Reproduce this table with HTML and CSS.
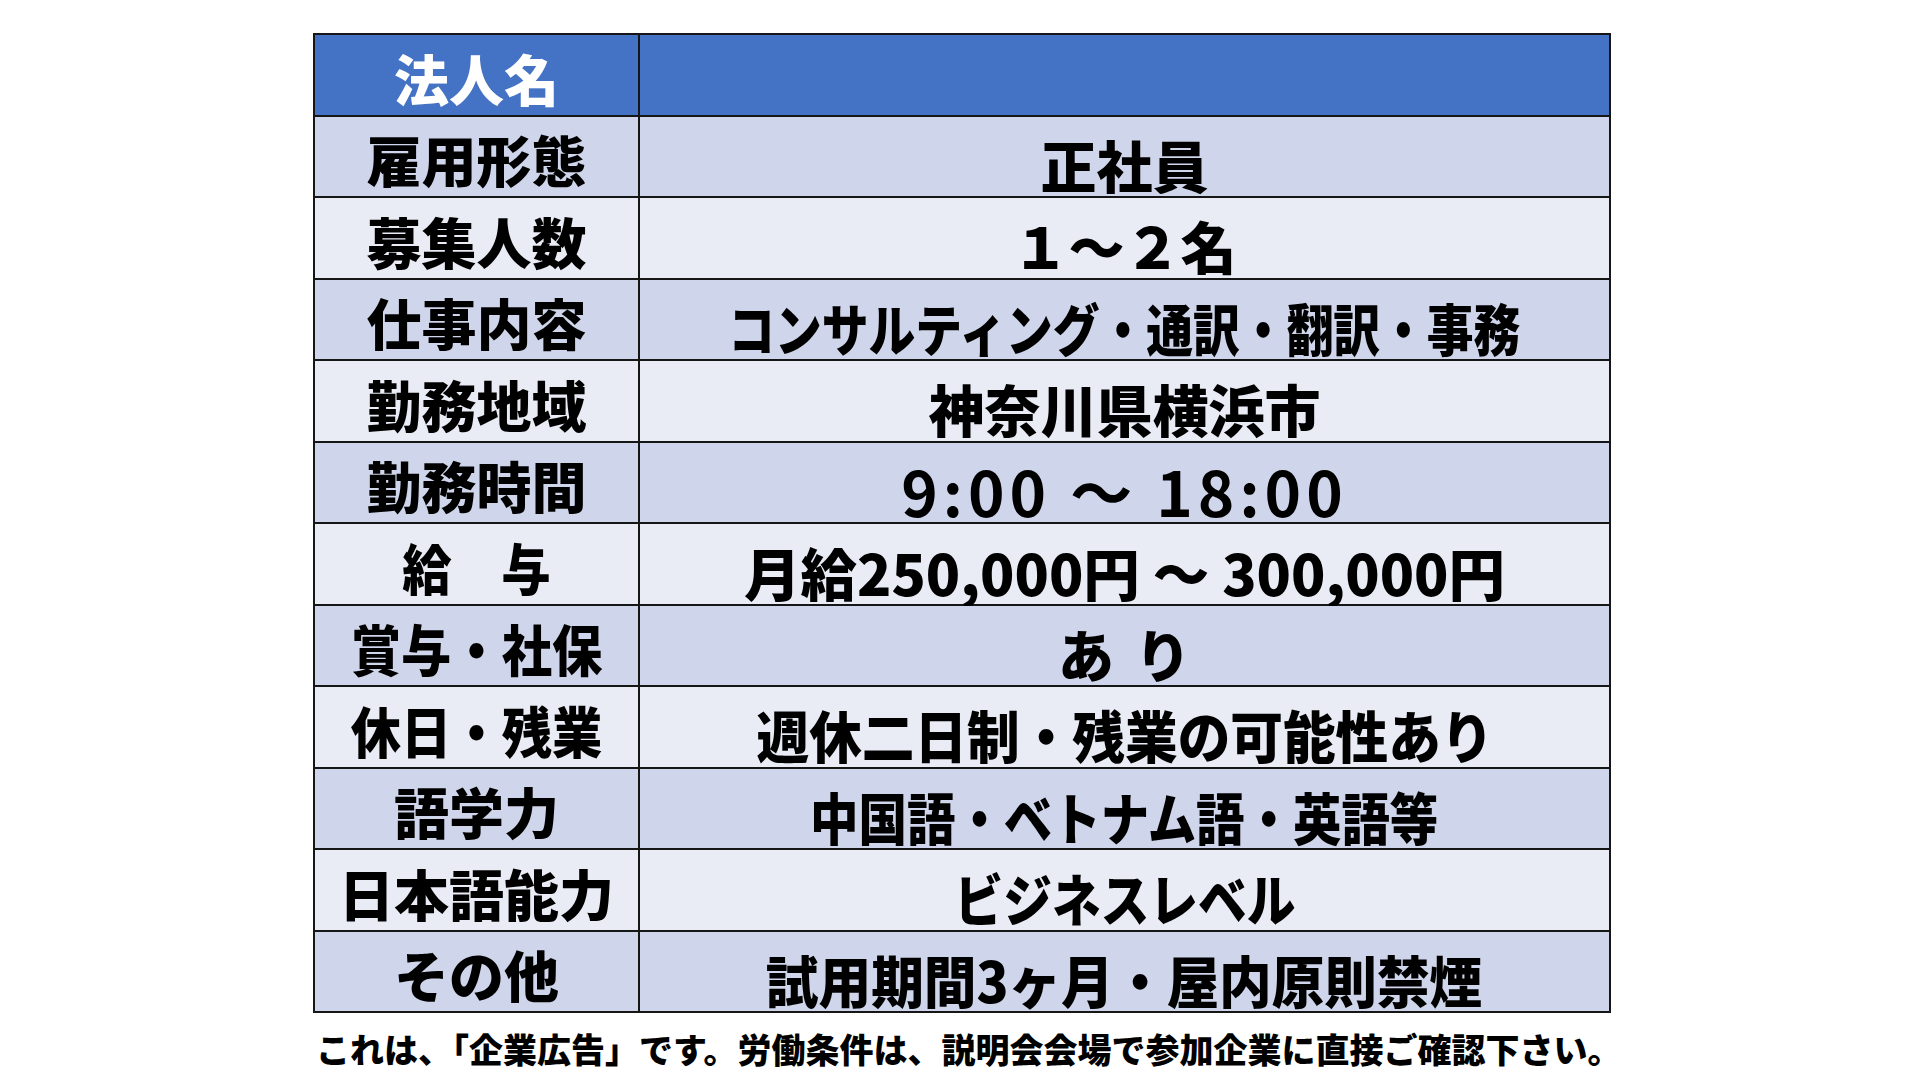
FILE: index.html
```html
<!DOCTYPE html>
<html lang="ja">
<head>
<meta charset="utf-8">
<title>求人票</title>
<link rel="stylesheet" href="styles.css">
</head>
<body>
<div class="page">
  <div class="sheet">
    <div class="cell head label">法人名</div>
    <div class="cell head"></div>

    <div class="cell dark label">雇用形態</div>
    <div class="cell dark value"><span class="t">正社員</span></div>

    <div class="cell light label">募集人数</div>
    <div class="cell light value"><span class="t">１～２名</span></div>

    <div class="cell dark label">仕事内容</div>
    <div class="cell dark value"><span class="t s83">コンサルティング・通訳・翻訳・事務</span></div>

    <div class="cell light label">勤務地域</div>
    <div class="cell light value"><span class="t">神奈川県横浜市</span></div>

    <div class="cell dark label">勤務時間</div>
    <div class="cell dark value"><span class="t time">9:00 ～ 18:00</span></div>

    <div class="cell light label"><span class="t s90">給　与</span></div>
    <div class="cell light value"><span class="t pay">月給250,000円 ～ 300,000円</span></div>

    <div class="cell dark label"><span class="t s92">賞与・社保</span></div>
    <div class="cell dark value"><span class="t wide">あ り</span></div>

    <div class="cell light label"><span class="t s92">休日・残業</span></div>
    <div class="cell light value"><span class="t s94">週休二日制・残業の可能性あり</span></div>

    <div class="cell dark label">語学力</div>
    <div class="cell dark value"><span class="t s86">中国語・ベトナム語・英語等</span></div>

    <div class="cell light label">日本語能力</div>
    <div class="cell light value"><span class="t s87">ビジネスレベル</span></div>

    <div class="cell dark label">その他</div>
    <div class="cell dark value"><span class="t s94">試用期間3ヶ月・屋内原則禁煙</span></div>
  </div>
  <p class="note">これは、「企業広告」です。労働条件は、説明会会場で参加企業に直接ご確認下さい。</p>
</div>
</body>
</html>
```

FILE: styles.css
```css
html, body {
  margin: 0;
  padding: 0;
  background: #ffffff;
}

body {
  font-family: "Noto Sans CJK JP", "Noto Sans", sans-serif;
  color: #000000;
}

.page {
  padding: 33px 0 0 313px;
}

.sheet {
  width: 1298px;
  box-sizing: border-box;
  display: grid;
  grid-template-columns: 323px 1fr;
  grid-auto-rows: 79.5px;
  gap: 2px;
  padding: 2px;
  background: #161616;
}

.cell {
  display: flex;
  align-items: center;
  justify-content: center;
  box-sizing: border-box;
  white-space: nowrap;
}

.head {
  background: #4472c4;
  color: #ffffff;
}

.dark {
  background: #cfd5ea;
}

.light {
  background: #e9ebf5;
}

.label {
  font-size: 55px;
  font-weight: 900;
  padding-top: 5px;
  line-height: 1;
}

.value {
  font-size: 56px;
  font-weight: 900;
  padding-top: 15px;
  line-height: 1;
}

.t {
  display: inline-block;
}

.s83 { transform: scaleX(0.835); }
.s86 { transform: scaleX(0.865); }
.s87 { transform: scaleX(0.87); }
.s90 { transform: scaleX(0.9); }
.s92 { transform: scaleX(0.915); }
.s94 { transform: scaleX(0.94); }

.wide {
  word-spacing: 8px;
}

.time {
  font-size: 62px;
  font-weight: 700;
  letter-spacing: 5px;
}

.pay {
  font-size: 56.5px;
}

.note {
  margin: 16px 0 0 3px;
  font-size: 34px;
  font-weight: 900;
  line-height: 1.2;
  white-space: nowrap;
}
```
